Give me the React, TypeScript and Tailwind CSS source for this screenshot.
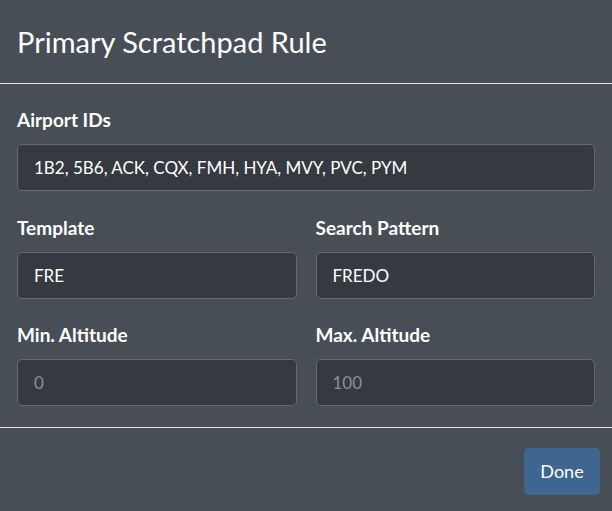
import React from "react";

function Field({ label, value, placeholder }: { label: string; value?: string; placeholder?: string }) {
  return (
    <div className="flex flex-col">
      <label className="text-[19px] font-bold leading-[24px] text-white mb-[12px]">{label}</label>
      <div className="h-[47px] rounded-[5px] border border-[#646b72] bg-[#343a40] px-[16px] flex items-center text-[17px]">
        {value ? <span className="text-white">{value}</span> : <span className="text-[#8a9097]">{placeholder}</span>}
      </div>
    </div>
  );
}

export default function App() {
  return (
    <div className="w-[612px] h-[511px] bg-[#474e55] flex flex-col" style={{ fontFamily: '"Lato", "Noto Sans", sans-serif' }}>
      <div className="h-[84px] border-b border-[#dee2e6] flex items-center px-[17px]">
        <h1 className="text-[29px] text-white leading-none">Primary Scratchpad Rule</h1>
      </div>
      <div className="px-[17px] pt-[24px] pb-[21px] flex flex-col gap-[25px]">
        <Field label="Airport IDs" value="1B2, 5B6, ACK, CQX, FMH, HYA, MVY, PVC, PYM" />
        <div className="grid grid-cols-2 gap-x-[19px] gap-y-[24px]">
          <Field label="Template" value="FRE" />
          <Field label="Search Pattern" value="FREDO" />
          <Field label="Min. Altitude" placeholder="0" />
          <Field label="Max. Altitude" placeholder="100" />
        </div>
      </div>
      <div className="border-t border-[#dee2e6] flex justify-end px-[12px] pt-[20px]">
        <button className="h-[47px] w-[76px] rounded-[5px] bg-[#3f6591] text-white text-[18px]">Done</button>
      </div>
    </div>
  );
}
